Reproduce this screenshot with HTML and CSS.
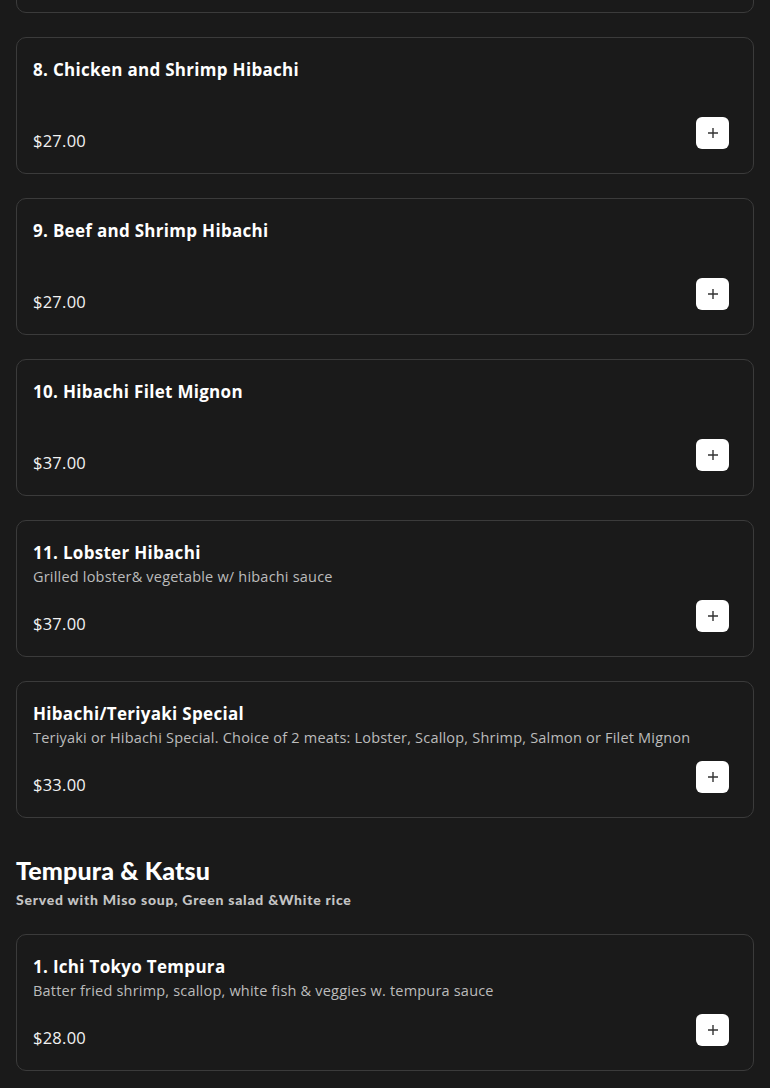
FILE: index.html
```html
<!DOCTYPE html>
<html lang="en">
<head>
  <meta charset="UTF-8" />
  <meta name="viewport" content="width=device-width, initial-scale=1.0"/>
  <title>Menu - Hibachi</title>
  <link rel="stylesheet" href="styles.css">
</head>
<body>
  <div class="menu">
    <div class="items scrolled">
      <div class="item">
        <h3 class="item-name">7. Steak and Chicken Hibachi</h3>
        <p class="item-desc"></p>
        <div class="item-foot">
          <span class="price">$27.00</span>
          <button class="add" aria-label="Add"><svg viewBox="0 0 12 12" width="12" height="12"><path d="M6 1v10M1 6h10" /></svg></button>
        </div>
      </div>

      <div class="item">
        <h3 class="item-name">8. Chicken and Shrimp Hibachi</h3>
        <p class="item-desc"></p>
        <div class="item-foot">
          <span class="price">$27.00</span>
          <button class="add" aria-label="Add"><svg viewBox="0 0 12 12" width="12" height="12"><path d="M6 1v10M1 6h10" /></svg></button>
        </div>
      </div>

      <div class="item">
        <h3 class="item-name">9. Beef and Shrimp Hibachi</h3>
        <p class="item-desc"></p>
        <div class="item-foot">
          <span class="price">$27.00</span>
          <button class="add" aria-label="Add"><svg viewBox="0 0 12 12" width="12" height="12"><path d="M6 1v10M1 6h10" /></svg></button>
        </div>
      </div>

      <div class="item">
        <h3 class="item-name">10. Hibachi Filet Mignon</h3>
        <p class="item-desc"></p>
        <div class="item-foot">
          <span class="price">$37.00</span>
          <button class="add" aria-label="Add"><svg viewBox="0 0 12 12" width="12" height="12"><path d="M6 1v10M1 6h10" /></svg></button>
        </div>
      </div>

      <div class="item">
        <h3 class="item-name">11. Lobster Hibachi</h3>
        <p class="item-desc">Grilled lobster&amp; vegetable w/ hibachi sauce</p>
        <div class="item-foot">
          <span class="price">$37.00</span>
          <button class="add" aria-label="Add"><svg viewBox="0 0 12 12" width="12" height="12"><path d="M6 1v10M1 6h10" /></svg></button>
        </div>
      </div>

      <div class="item">
        <h3 class="item-name">Hibachi/Teriyaki Special</h3>
        <p class="item-desc">Teriyaki or Hibachi Special. Choice of 2 meats: Lobster, Scallop, Shrimp, Salmon or Filet Mignon</p>
        <div class="item-foot">
          <span class="price">$33.00</span>
          <button class="add" aria-label="Add"><svg viewBox="0 0 12 12" width="12" height="12"><path d="M6 1v10M1 6h10" /></svg></button>
        </div>
      </div>
    </div>

    <div class="section-head">
      <h2>Tempura &amp; Katsu</h2>
      <p>Served with Miso soup, Green salad &amp;White rice</p>
    </div>

    <div class="items">
      <div class="item">
        <h3 class="item-name">1. Ichi Tokyo Tempura</h3>
        <p class="item-desc">Batter fried shrimp, scallop, white fish &amp; veggies w. tempura sauce</p>
        <div class="item-foot">
          <span class="price">$28.00</span>
          <button class="add" aria-label="Add"><svg viewBox="0 0 12 12" width="12" height="12"><path d="M6 1v10M1 6h10" /></svg></button>
        </div>
      </div>
    </div>
  </div>
</body>
</html>
```

FILE: styles.css
```css
:root {
  --bg: #1a1a1a;
  --card: #1a1a1a;
  --line: #3b3b3b;
  --fg: #fff;
  --muted: #bcbcbc;
}
* { box-sizing: border-box; }
body {
  margin: 0;
  background: var(--bg);
  color: var(--fg);
  font-family: "Open Sans", "Liberation Sans", sans-serif;
  overflow: hidden;
}
.menu {
  padding: 0 16px 24px;
}
.items {
  display: flex;
  flex-direction: column;
  gap: 24px;
}
/* page is scrolled: first card sits mostly above the fold */
.items.scrolled {
  margin-top: -124px;
}
.item {
  background: var(--card);
  border: 1px solid var(--line);
  border-radius: 10px;
  padding: 20px 24px 20px 16px;
}
.item-name {
  margin: 0;
  font-size: 17px;
  line-height: 24px;
  font-weight: 700;
  letter-spacing: 0.3px;
}
.item-desc {
  margin: 0;
  min-height: 24px;
  font-size: 14.5px;
  line-height: 24px;
  font-weight: 400;
  color: var(--muted);
  letter-spacing: 0.2px;
}
.item-foot {
  margin-top: 11px;
  display: flex;
  justify-content: space-between;
  align-items: flex-end;
}
.price {
  font-size: 16.5px;
  line-height: 24px;
  color: #f2f2f2;
  letter-spacing: 0.25px;
}
.add {
  width: 33px;
  height: 32px;
  margin-bottom: 4px;
  border: none;
  border-radius: 6px;
  background: #fff;
  display: flex;
  align-items: center;
  justify-content: center;
  padding: 0;
  cursor: pointer;
}
.add svg {
  stroke: #333;
  stroke-width: 1.4;
  fill: none;
}
.section-head {
  margin: 36px 0 24px;
}
.section-head h2 {
  margin: 0;
  font-family: Lato, "Open Sans", sans-serif;
  font-size: 25px;
  line-height: 32px;
  font-weight: 900;
  letter-spacing: 0.15px;
}
.section-head p {
  margin: 4px 0 0;
  font-family: Lato, "Open Sans", sans-serif;
  font-size: 14px;
  line-height: 20px;
  font-weight: 900;
  color: #c4c4c4;
  letter-spacing: 0.75px;
}
```
